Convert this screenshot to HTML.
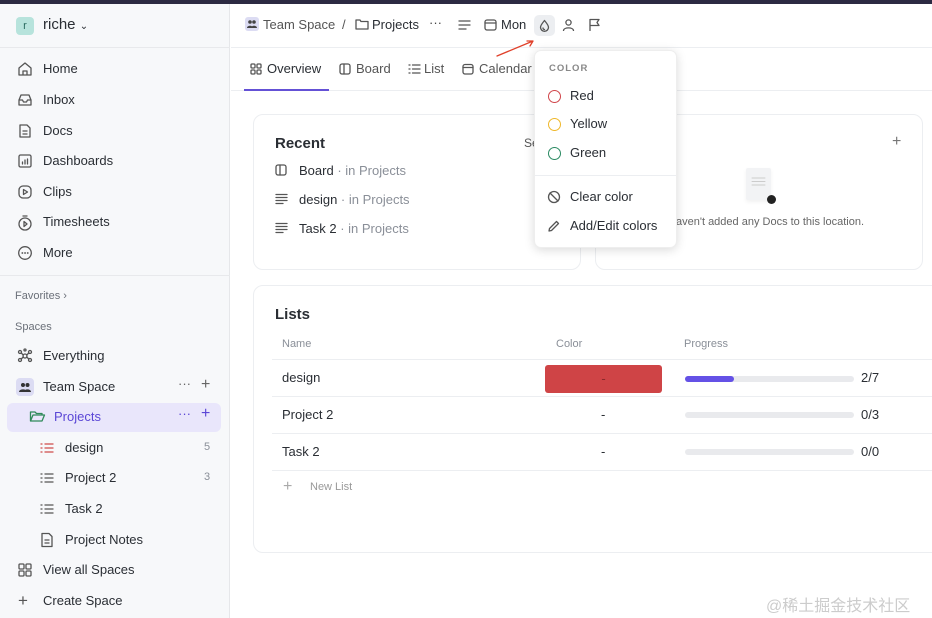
<!DOCTYPE html><html><head><meta charset="utf-8"><style>
*{box-sizing:border-box;margin:0;padding:0}
body{width:932px;height:618px;overflow:hidden;position:relative;font-family:"Liberation Sans",sans-serif;color:#2a2e34;background:#fff;font-size:13px}
.a{position:absolute;white-space:nowrap}
svg{position:absolute;fill:none;stroke:#555;stroke-width:1.3;stroke-linecap:round;stroke-linejoin:round}
.side{position:absolute;left:0;top:4px;width:230px;height:614px;background:#f7f8fa;border-right:1px solid #e6e7ea}
.nav{font-size:13px;color:#2a2e34}
.g{color:#8a8f98}
.card{position:absolute;background:#fff;border:1px solid #eceef1;border-radius:10px}
.hl{position:absolute;height:1px;background:#eceef1}
</style></head><body>
<div class="a" style="left:0;top:0;width:932px;height:4px;background:#2c2a42"></div>
<div class="side"></div>
<div class="hl" style="left:0;top:47px;width:230px;background:#e8e9ec"></div>
<div class="hl" style="left:0;top:275px;width:230px;background:#e8e9ec"></div>
<div class="a" style="left:16px;top:17px;width:18px;height:18px;border-radius:4px;background:#b7e3dc;color:#2a6b60;font-size:11px;text-align:center;line-height:18px">r</div>
<div class="a" style="left:43px;top:16px;font-size:15px;font-weight:500">riche <span style="font-size:10px">⌄</span></div>
<svg style="left:17px;top:61px" width="16" height="16"><path d="M2 7L8 2L14 7V14H2Z M6 14V10H10V14"/></svg>
<div class="a nav" style="left:43px;top:61px">Home</div>
<svg style="left:17px;top:92px" width="16" height="16"><path d="M2 8L4 3H12L14 8V13H2Z M2 8H5.5L6.5 10H9.5L10.5 8H14"/></svg>
<div class="a nav" style="left:43px;top:92px">Inbox</div>
<svg style="left:17px;top:123px" width="16" height="16"><path d="M3 2H10L13 5V14H3Z M6 8H10 M6 11H10"/></svg>
<div class="a nav" style="left:43px;top:123px">Docs</div>
<svg style="left:17px;top:153px" width="16" height="16"><rect x="2" y="2" width="12" height="12" rx="1.5"/><path d="M5.5 11V9 M8 11V7 M10.5 11V6"/></svg>
<div class="a nav" style="left:43px;top:153px">Dashboards</div>
<svg style="left:17px;top:184px" width="16" height="16"><rect x="2" y="2" width="12" height="12" rx="4"/><path d="M6.5 5.5L10.5 8L6.5 10.5Z"/></svg>
<div class="a nav" style="left:43px;top:184px">Clips</div>
<svg style="left:17px;top:214px" width="16" height="17"><circle cx="8" cy="10" r="6"/><path d="M6 2H10 M7 7.5L10 10L7 12.5Z"/></svg>
<div class="a nav" style="left:43px;top:214px">Timesheets</div>
<svg style="left:17px;top:245px" width="16" height="16"><circle cx="8" cy="8" r="6.3"/><path d="M5.3 8h.1M8 8h.1M10.7 8h.1" stroke-width="1.8"/></svg>
<div class="a nav" style="left:43px;top:245px">More</div>
<div class="a g" style="left:15px;top:290px;font-size:11px;color:#6b7079">Favorites ›</div>
<div class="a g" style="left:15px;top:321px;font-size:11px;color:#6b7079">Spaces</div>
<svg style="left:17px;top:348px" width="16" height="16"><circle cx="8" cy="8" r="2"/><circle cx="3" cy="4" r="1.5"/><circle cx="13" cy="4" r="1.5"/><circle cx="3" cy="12" r="1.5"/><circle cx="13" cy="12" r="1.5"/><circle cx="8" cy="2" r="1"/><path d="M4.2 5L6.3 7 M11.8 5L9.7 7 M4.2 11L6.3 9 M11.8 11L9.7 9"/></svg>
<div class="a nav" style="left:43px;top:348px">Everything</div>
<div class="a" style="left:16px;top:378px;width:18px;height:18px;border-radius:4px;background:#dcdcf3"></div>
<svg style="left:18px;top:380px" width="14" height="14"><circle cx="5" cy="5" r="2" fill="#333" stroke="none"/><circle cx="9.5" cy="5" r="2" fill="#333" stroke="none"/><path d="M1 12C1 8.5 9 8.5 9 12Z M6 12C6 8.5 13 8.5 13 12Z" fill="#333" stroke="none"/></svg>
<div class="a nav" style="left:43px;top:379px">Team Space</div>
<div class="a" style="left:178px;top:376px;color:#666">···</div>
<div class="a" style="left:201px;top:376px;color:#666;font-size:16px">+</div>
<div class="a" style="left:7px;top:403px;width:214px;height:29px;border-radius:6px;background:#e9e6fb"></div>
<svg style="left:29px;top:409px;stroke:#2f8a5a" width="17" height="15"><path d="M1.5 12V3H6L7.5 4.5H13V6 M1.5 12L4 6H15.5L13 12Z"/></svg>
<div class="a" style="left:54px;top:409px;color:#5b47d6;font-weight:500">Projects</div>
<div class="a" style="left:178px;top:406px;color:#5b47d6">···</div>
<div class="a" style="left:201px;top:405px;color:#5b47d6;font-size:16px">+</div>
<svg style="left:40px;top:441px;stroke:#d04b4b" width="14" height="14"><path d="M1 3h1M1 7h1M1 11h1M5 3h8M5 7h8M5 11h8"/></svg>
<div class="a nav" style="left:65px;top:440px">design</div><div class="a g" style="left:204px;top:441px;font-size:11px">5</div>
<svg style="left:40px;top:471px" width="14" height="14"><path d="M1 3h1M1 7h1M1 11h1M5 3h8M5 7h8M5 11h8"/></svg>
<div class="a nav" style="left:65px;top:470px">Project 2</div><div class="a g" style="left:204px;top:471px;font-size:11px">3</div>
<svg style="left:40px;top:502px" width="14" height="14"><path d="M1 3h1M1 7h1M1 11h1M5 3h8M5 7h8M5 11h8"/></svg>
<div class="a nav" style="left:65px;top:501px">Task 2</div>
<svg style="left:40px;top:532px" width="14" height="16"><path d="M2 1.5H9L12 4.5V14.5H2Z M5 8H9 M5 11H9"/></svg>
<div class="a nav" style="left:65px;top:532px">Project Notes</div>
<svg style="left:17px;top:562px" width="16" height="16"><rect x="2" y="2" width="5" height="5" rx="1"/><rect x="9" y="2" width="5" height="5" rx="1"/><rect x="2" y="9" width="5" height="5" rx="1"/><rect x="9" y="9" width="5" height="5" rx="1"/></svg>
<div class="a nav" style="left:43px;top:562px">View all Spaces</div>
<div class="a" style="left:18px;top:591px;font-size:17px;color:#555">+</div>
<div class="a nav" style="left:43px;top:593px">Create Space</div>

<div class="hl" style="left:231px;top:47px;width:701px"></div>
<div class="a" style="left:245px;top:17px;width:14px;height:14px;border-radius:3px;background:#dcdcf3"></div>
<svg style="left:246px;top:18px" width="12" height="12"><circle cx="4" cy="4" r="1.8" fill="#444" stroke="none"/><circle cx="8" cy="4" r="1.8" fill="#444" stroke="none"/><path d="M1 10C1 7 7 7 7 10Z M5 10C5 7 11 7 11 10Z" fill="#444" stroke="none"/></svg>
<div class="a" style="left:263px;top:17px;color:#555">Team Space</div>
<div class="a" style="left:342px;top:17px;color:#555">/</div>
<svg style="left:355px;top:18px" width="14" height="12"><path d="M1 2H5L6 3.5H13V11H1Z"/></svg>
<div class="a" style="left:372px;top:17px;font-weight:500">Projects</div>
<div class="a" style="left:429px;top:15px;color:#444">···</div>
<svg style="left:458px;top:19px" width="13" height="12"><path d="M1 2H12 M1 6H12 M1 10H8"/></svg>
<svg style="left:484px;top:18px" width="13" height="13"><rect x="1" y="2" width="11" height="10" rx="2"/><path d="M1 5H12"/></svg>
<div class="a" style="left:501px;top:17px">Mon</div>
<div class="a" style="left:534px;top:15px;width:21px;height:21px;border-radius:5px;background:#eceef1"></div>
<svg style="left:538px;top:19px" width="13" height="13"><path d="M6.5 1.5C4 4.5 2.5 6.5 2.5 8.3A4 4 0 0 0 10.5 8.3C10.5 6.5 9 4.5 6.5 1.5Z M5 9A1.5 1.5 0 0 0 6.5 10.5"/></svg>
<svg style="left:562px;top:18px" width="13" height="13"><circle cx="6.5" cy="4.5" r="2.6"/><path d="M1.5 12.5C2 9 11 9 11.5 12.5"/></svg>
<svg style="left:588px;top:18px" width="13" height="13"><path d="M2 12.5V1.5H11L9 4.5L11 7.5H2"/></svg>
<svg style="left:496px;top:38px;stroke:#e0402a;stroke-width:1.3" width="40" height="20"><path d="M1 18L37 3 M31 3L37 3L34 8"/></svg>

<div class="hl" style="left:231px;top:90px;width:701px"></div>
<div class="a" style="left:244px;top:89px;width:85px;height:2px;background:#6451d6"></div>
<svg style="left:250px;top:63px" width="12" height="12"><rect x="1" y="1" width="4" height="4" rx="1"/><rect x="7" y="1" width="4" height="4" rx="1"/><rect x="1" y="7" width="4" height="4" rx="1"/><rect x="7" y="7" width="4" height="4" rx="1"/></svg>
<div class="a" style="left:267px;top:61px;font-weight:500">Overview</div>
<svg style="left:339px;top:63px" width="12" height="12"><rect x="1" y="1" width="10" height="10" rx="2"/><path d="M5 1V11"/></svg>
<div class="a" style="left:356px;top:61px;color:#555">Board</div>
<svg style="left:408px;top:63px" width="13" height="12"><path d="M1 2h1M1 6h1M1 10h1M4.5 2h7.5M4.5 6h7.5M4.5 10h7.5"/></svg>
<div class="a" style="left:424px;top:61px;color:#555">List</div>
<svg style="left:462px;top:63px" width="12" height="12"><rect x="1" y="1.5" width="10" height="9.5" rx="2"/><path d="M1 4.5H11"/></svg>
<div class="a" style="left:479px;top:61px;color:#555">Calendar</div>

<div class="card" style="left:253px;top:114px;width:328px;height:156px"></div>
<div class="a" style="left:275px;top:135px;font-size:15px;font-weight:600">Recent</div>
<div class="a" style="left:524px;top:136px;font-size:12px;color:#555">Se</div>
<svg style="left:275px;top:164px" width="12" height="12"><rect x="1" y="1" width="10" height="10" rx="2"/><path d="M5 1V11"/></svg>
<div class="a" style="left:299px;top:163px">Board <span class="g">· in Projects</span></div>
<svg style="left:275px;top:193px" width="13" height="12"><path d="M1 1.5H12M1 4.5H12M1 7.5H12M1 10.5H8"/></svg>
<div class="a" style="left:299px;top:192px">design <span class="g">· in Projects</span></div>
<svg style="left:275px;top:222px" width="13" height="12"><path d="M1 1.5H12M1 4.5H12M1 7.5H12M1 10.5H8"/></svg>
<div class="a" style="left:299px;top:221px">Task 2 <span class="g">· in Projects</span></div>
<div class="card" style="left:595px;top:114px;width:328px;height:156px"></div>
<div class="a" style="left:892px;top:133px;font-size:16px;color:#777">+</div>
<div class="a" style="left:746px;top:168px;width:25px;height:32px;background:#f2f3f5;border-radius:2px;box-shadow:0 2px 4px rgba(0,0,0,.06)"></div>
<svg style="left:751px;top:177px;stroke:#ccc;stroke-width:1" width="16" height="12"><path d="M1 1H14M1 4.5H14M1 8H14"/></svg>
<div class="a" style="left:767px;top:195px;width:9px;height:9px;border-radius:50%;background:#222"></div>
<div class="a" style="left:676px;top:216px;font-size:11px;color:#666">aven't added any Docs to this location.</div>

<div class="card" style="left:253px;top:285px;width:700px;height:268px"></div>
<div class="a" style="left:275px;top:306px;font-size:15px;font-weight:600">Lists</div>
<div class="a g" style="left:282px;top:338px;font-size:11px">Name</div>
<div class="a g" style="left:556px;top:338px;font-size:11px">Color</div>
<div class="a g" style="left:684px;top:338px;font-size:11px">Progress</div>
<div class="hl" style="left:272px;top:359px;width:660px"></div>
<div class="hl" style="left:272px;top:396px;width:660px"></div>
<div class="hl" style="left:272px;top:433px;width:660px"></div>
<div class="hl" style="left:272px;top:470px;width:660px"></div>
<div class="a" style="left:282px;top:370px">design</div>
<div class="a" style="left:545px;top:365px;width:117px;height:28px;border-radius:3px;background:#cf4446;color:#8a2a2c;text-align:center;line-height:28px">-</div>
<div class="a" style="left:685px;top:376px;width:169px;height:6px;border-radius:3px;background:#e9eaed"></div>
<div class="a" style="left:685px;top:376px;width:49px;height:6px;border-radius:3px;background:#6451e6"></div>
<div class="a" style="left:861px;top:370px">2/7</div>
<div class="a" style="left:282px;top:407px">Project 2</div>
<div class="a" style="left:601px;top:407px">-</div>
<div class="a" style="left:685px;top:412px;width:169px;height:6px;border-radius:3px;background:#e9eaed"></div>
<div class="a" style="left:861px;top:407px">0/3</div>
<div class="a" style="left:282px;top:444px">Task 2</div>
<div class="a" style="left:601px;top:444px">-</div>
<div class="a" style="left:685px;top:449px;width:169px;height:6px;border-radius:3px;background:#e9eaed"></div>
<div class="a" style="left:861px;top:444px">0/0</div>
<div class="a" style="left:283px;top:478px;font-size:16px;color:#aaa">+</div>
<div class="a" style="left:310px;top:481px;font-size:11px;color:#999">New List</div>

<div class="a" style="left:534px;top:50px;width:143px;height:198px;background:#fff;border-radius:7px;box-shadow:0 2px 10px rgba(0,0,0,.15);border:1px solid #eee"></div>
<div class="a" style="left:549px;top:63px;font-size:9.5px;letter-spacing:1px;color:#888;font-weight:600">COLOR</div>
<div class="a" style="left:548px;top:90px;width:13px;height:13px;border-radius:50%;border:1px solid #d0454a"></div>
<div class="a" style="left:570px;top:88px">Red</div>
<div class="a" style="left:548px;top:118px;width:13px;height:13px;border-radius:50%;border:1px solid #efb729"></div>
<div class="a" style="left:570px;top:116px">Yellow</div>
<div class="a" style="left:548px;top:147px;width:13px;height:13px;border-radius:50%;border:1px solid #2a8a62"></div>
<div class="a" style="left:570px;top:145px">Green</div>
<div class="hl" style="left:535px;top:175px;width:141px"></div>
<svg style="left:547px;top:190px" width="14" height="14"><circle cx="7" cy="7" r="5.5"/><path d="M3 3L11 11"/></svg>
<div class="a" style="left:570px;top:189px">Clear color</div>
<svg style="left:547px;top:219px" width="14" height="14"><path d="M2 12L2.5 9.5L9.5 2.5L11.5 4.5L4.5 11.5Z"/></svg>
<div class="a" style="left:570px;top:218px">Add/Edit colors</div>
<div class="a" style="left:766px;top:592px;font-size:16px;color:#ccc;font-family:'Liberation Sans','Noto Sans CJK SC',sans-serif">@稀土掘金技术社区</div>
</body></html>
